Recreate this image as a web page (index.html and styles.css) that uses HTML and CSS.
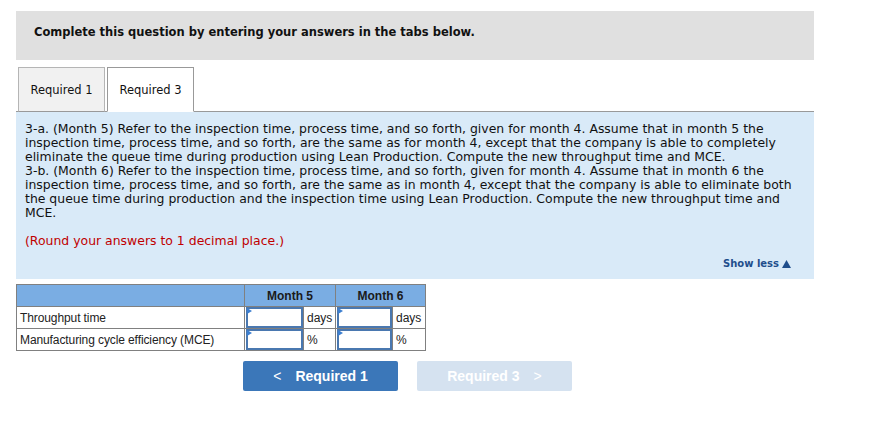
FILE: index.html
```html
<!DOCTYPE html>
<html>
<head>
<meta charset="utf-8">
<link rel="stylesheet" href="styles.css">
</head>
<body>
<div class="wrap">
  <div class="instr">Complete this question by entering your answers in the tabs below.</div>
  <div class="tabs">
    <div class="tab">Required 1</div>
    <div class="tab active">Required 3</div>
    <div class="tabfill"></div>
  </div>
  <div class="panel">
    <p class="q">3-a. (Month 5) Refer to the inspection time, process time, and so forth, given for month 4. Assume that in month 5 the<br>inspection time, process time, and so forth, are the same as for month 4, except that the company is able to completely<br>eliminate the queue time during production using Lean Production. Compute the new throughput time and MCE.<br>3-b. (Month 6) Refer to the inspection time, process time, and so forth, given for month 4. Assume that in month 6 the<br>inspection time, process time, and so forth, are the same as in month 4, except that the company is able to eliminate both<br>the queue time during production and the inspection time using Lean Production. Compute the new throughput time and<br>MCE.</p>
    <p class="note">(Round your answers to 1 decimal place.)</p>
    <div class="showrow"><span class="show">Show less <svg class="tri" width="9" height="8" viewBox="0 0 9 8"><path d="M4.5 0 L9 8 L0 8 Z" fill="#1f4e8c"/></svg></span></div>
  </div>
  <table class="grid">
    <colgroup>
      <col class="w-label"><col class="w-in5"><col class="w-u5"><col class="w-in6"><col class="w-u6">
    </colgroup>
    <tr class="head">
      <th class="c-label"></th>
      <th colspan="2">Month 5</th>
      <th colspan="2">Month 6</th>
    </tr>
    <tr>
      <td class="c-label">Throughput time</td>
      <td class="c-in"><div class="inp"><span class="mark"></span></div></td>
      <td class="c-unit">days</td>
      <td class="c-in"><div class="inp"><span class="mark"></span></div></td>
      <td class="c-unit">days</td>
    </tr>
    <tr>
      <td class="c-label">Manufacturing cycle efficiency (MCE)</td>
      <td class="c-in"><div class="inp"><span class="mark"></span></div></td>
      <td class="c-unit">%</td>
      <td class="c-in"><div class="inp"><span class="mark"></span></div></td>
      <td class="c-unit">%</td>
    </tr>
  </table>
  <div class="nav">
    <div class="btn prev"><span class="chev">&lt;</span>Required 1</div>
    <div class="btn next">Required 3<span class="chev r">&gt;</span></div>
  </div>
</div>
</body>
</html>
```
FILE: styles.css
```css
* { box-sizing: border-box; }
body { margin: 0; background: #fff; font-family: "DejaVu Sans", Verdana, sans-serif; color: #000; }
.wrap { padding: 11px 0 0 16px; width: 814px; }
.instr { background: #e0e0e0; height: 49px; padding: 13px 18px 0; font-weight: bold; font-size: 11.5px; line-height: 16px; color: #111; }
.tabs { display: flex; margin-top: 7px; height: 45px; padding-left: 2px; border-bottom: 1px solid #999; }
.tab { width: 87px; height: 45px; margin-right: 2px; background: #f1f1f1; border: 1px solid #b5b5b5; border-bottom: 1px solid #999; font-size: 11.5px; display: flex; align-items: center; justify-content: center; color: #111; }
.tab.active { background: #fff; border-color: #999; border-bottom: 1px solid #fff; height: 45px; }
.tabfill { flex: 1; }
.panel { background: #d9eaf8; padding: 10px 10px 0 9px; height: 167px; position: relative; }
.q { margin: 0; font-size: 12.45px; line-height: 14px; color: #111; white-space: nowrap; }
.note { margin: 14px 0 0; font-size: 12.45px; line-height: 14px; color: #c00000; }
.showrow { display: flex; justify-content: flex-end; margin-top: 10px; padding-right: 13px; }
.show { font-weight: bold; font-size: 10px; color: #1f4e8c; display: flex; align-items: center; gap: 3px; }
.grid { border-collapse: collapse; table-layout: fixed; width: 409px; margin-top: 5px; font-family: "Liberation Sans", Arial, sans-serif; font-size: 12px; }
.w-label { width: 228px; }
.w-in5 { width: 59px; }
.w-u5 { width: 32px; }
.w-in6 { width: 57px; }
.w-u6 { width: 33px; }
.grid td, .grid th { border: 1px solid #808080; height: 22px; padding: 0; }
.head th { background: #7aade3; font-weight: bold; font-size: 12px; color: #1a1a1a; text-align: center; }
.c-label { padding-left: 3px !important; text-align: left; color: #222; letter-spacing: -0.1px; }
.c-in { padding: 0 !important; }
.c-unit { padding-left: 3px !important; color: #222; }
.inp { position: relative; height: 21px; margin: 0 0 0 1px; border: 2px solid #4a78b0; background: #fff; }
.mark { position: absolute; left: -1px; top: -1px; width: 0; height: 0; border-top: 3px solid transparent; border-bottom: 3px solid transparent; border-left: 5px solid #3d7fd0; }
.nav { display: flex; gap: 19px; margin-top: 10px; padding-left: 227px; }
.btn { width: 155px; height: 30px; border-radius: 2px; display: flex; align-items: center; justify-content: center; font-family: "Liberation Sans", Arial, sans-serif; font-weight: bold; font-size: 14px; color: #fff; }
.prev { background: #3b77b9; }
.next { background: #d5e2f0; }
.chev { font-weight: normal; margin-right: 14px; font-size: 14px; }
.chev.r { margin-right: 0; margin-left: 14px; }
```
